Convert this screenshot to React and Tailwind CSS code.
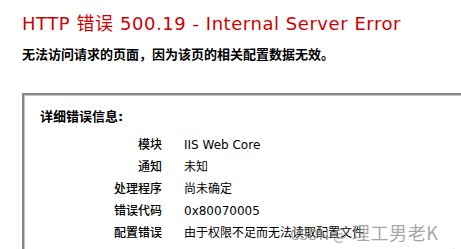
import React from "react";

const rows = [
  ["模块", "IIS Web Core"],
  ["通知", "未知"],
  ["处理程序", "尚未确定"],
  ["错误代码", "0x80070005"],
  ["配置错误", "由于权限不足而无法读取配置文件"],
];

export default function App() {
  return (
    <div
      className="relative w-[461px] h-[249px] overflow-hidden bg-white text-black"
      style={{ fontFamily: '"DejaVu Sans", Verdana, "Noto Sans CJK SC", sans-serif' }}
    >
      <div className="pl-[22px] pt-[12px]">
        <h2 className="text-[18px] leading-[24px] tracking-[0.55px] text-[#cc0000] font-normal whitespace-nowrap">
          HTTP 错误 500.19 - Internal Server Error
        </h2>
        <h3 className="mt-[10px] text-[13px] leading-[18px] font-bold whitespace-nowrap">
          无法访问请求的页面，因为该页的相关配置数据无效。
        </h3>
      </div>
      <div className="ml-[22px] mt-[29px] w-[470px] h-[200px] border-2 border-[#858585] shadow-[inset_1px_1px_0_#c4c4c4]">
        <div className="pl-[16px] pt-[12px]">
          <h4 className="text-[13px] leading-[20px] font-bold">详细错误信息:</h4>
          <div className="mt-[7px] grid grid-cols-[122px_1fr] gap-x-[22px] text-[12px] leading-[22px]">
            {rows.map(([k, v]) => (
              <React.Fragment key={k}>
                <div className="text-right whitespace-nowrap font-medium">{k}</div>
                <div className="whitespace-nowrap">{v}</div>
              </React.Fragment>
            ))}
            <div></div>
            <div className="mt-[1px] whitespace-nowrap">不能在此路径中使用此配置节。如果在父级别上锁定了该节，便会出现这种情况。</div>
          </div>
        </div>
      </div>
      <div
        className="absolute left-[290px] top-[221px] leading-[22px] text-[#8f8f8f]/80 whitespace-nowrap flex items-baseline"
        style={{ fontFamily: '"Noto Sans CJK SC", sans-serif' }}
      >
        <span className="text-[15px] mr-[5px]">CSDN @</span>
        <span className="text-[18px] tracking-[0.6px]">理工男老K</span>
      </div>
    </div>
  );
}
